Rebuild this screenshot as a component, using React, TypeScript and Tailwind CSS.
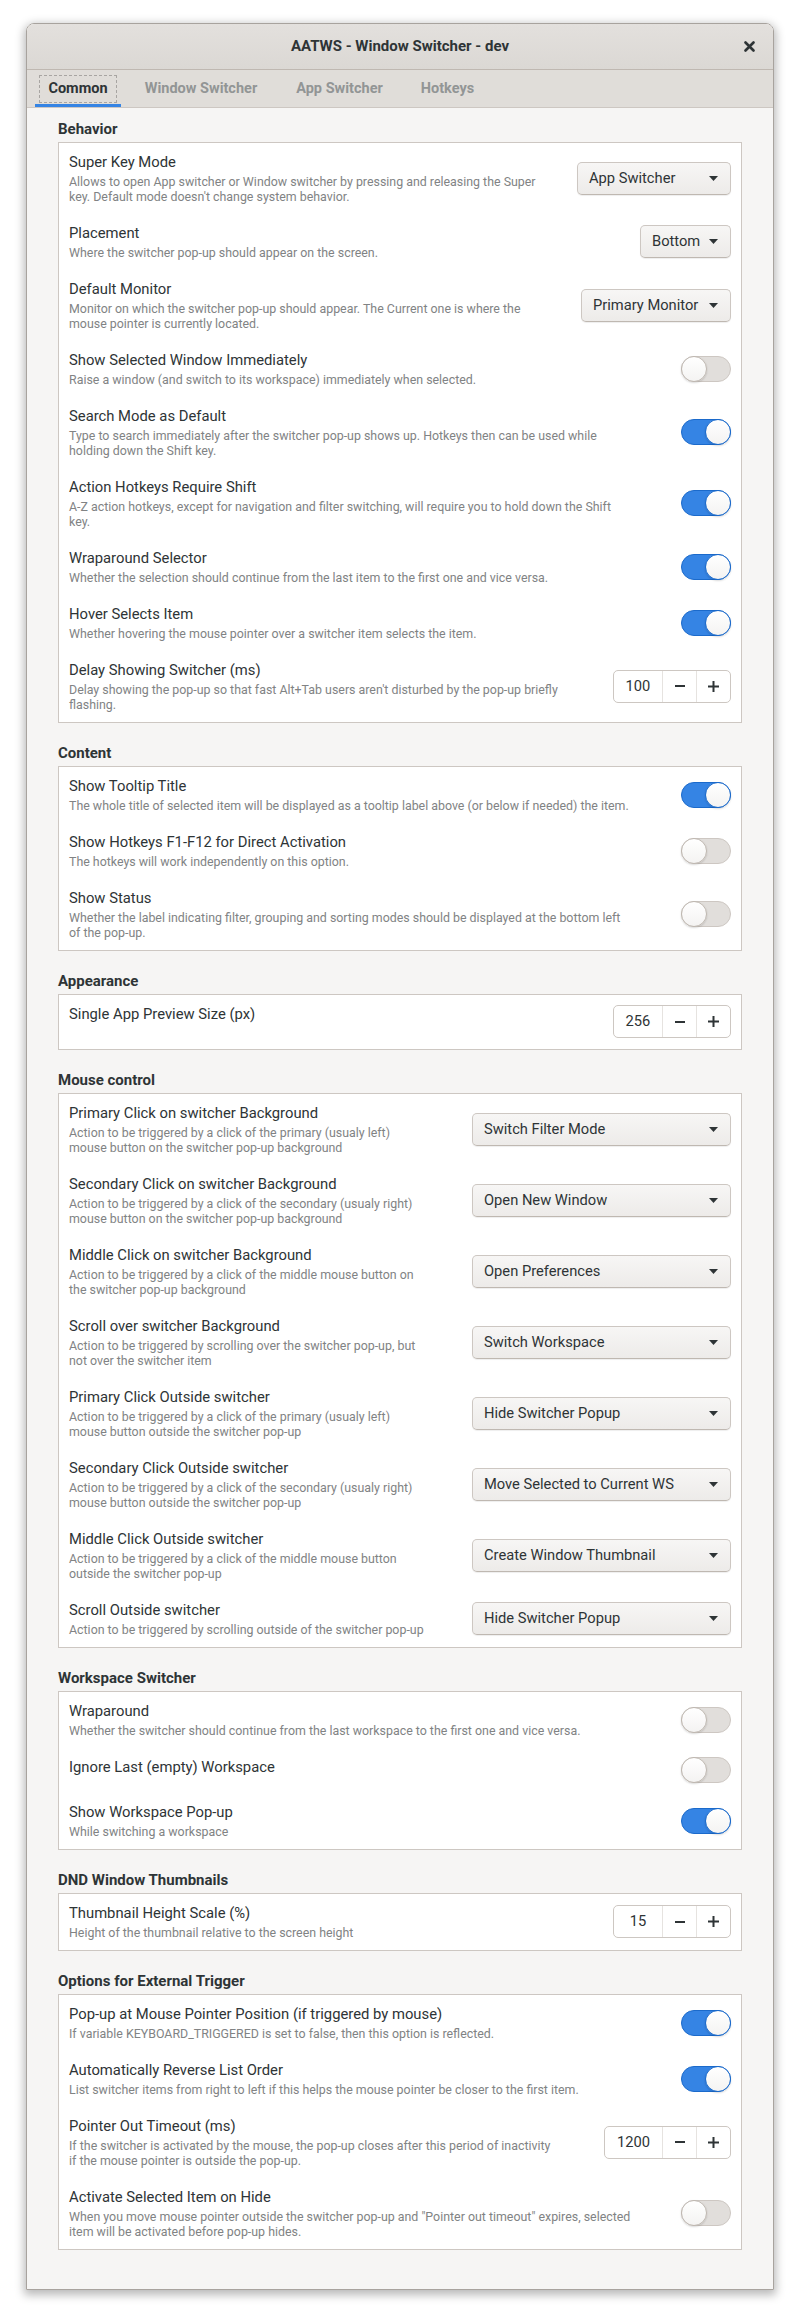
import React from "react";

type Ctrl =
  | { kind: "switch"; on: boolean }
  | { kind: "drop"; label: string; w: number }
  | { kind: "spin"; value: string; entryW: number };

type Row = { title: string; desc?: string[]; ctrl: Ctrl; minH?: boolean };
type Section = { heading: string; rows: Row[] };

const sections: Section[] = [
  {
    heading: "Behavior",
    rows: [
      {
        title: "Super Key Mode",
        desc: [
          "Allows to open App switcher or Window switcher by pressing and releasing the Super",
          "key. Default mode doesn't change system behavior.",
        ],
        ctrl: { kind: "drop", label: "App Switcher", w: 154 },
      },
      {
        title: "Placement",
        desc: ["Where the switcher pop-up should appear on the screen."],
        ctrl: { kind: "drop", label: "Bottom", w: 91 },
      },
      {
        title: "Default Monitor",
        desc: [
          "Monitor on which the switcher pop-up should appear. The Current one is where the",
          "mouse pointer is currently located.",
        ],
        ctrl: { kind: "drop", label: "Primary Monitor", w: 150 },
      },
      {
        title: "Show Selected Window Immediately",
        desc: ["Raise a window (and switch to its workspace) immediately when selected."],
        ctrl: { kind: "switch", on: false },
      },
      {
        title: "Search Mode as Default",
        desc: [
          "Type to search immediately after the switcher pop-up shows up. Hotkeys then can be used while",
          "holding down the Shift key.",
        ],
        ctrl: { kind: "switch", on: true },
      },
      {
        title: "Action Hotkeys Require Shift",
        desc: [
          "A-Z action hotkeys, except for navigation and filter switching, will require you to hold down the Shift",
          "key.",
        ],
        ctrl: { kind: "switch", on: true },
      },
      {
        title: "Wraparound Selector",
        desc: ["Whether the selection should continue from the last item to the first one and vice versa."],
        ctrl: { kind: "switch", on: true },
      },
      {
        title: "Hover Selects Item",
        desc: ["Whether hovering the mouse pointer over a switcher item selects the item."],
        ctrl: { kind: "switch", on: true },
      },
      {
        title: "Delay Showing Switcher (ms)",
        desc: [
          "Delay showing the pop-up so that fast Alt+Tab users aren't disturbed by the pop-up briefly",
          "flashing.",
        ],
        ctrl: { kind: "spin", value: "100", entryW: 48 },
      },
    ],
  },
  {
    heading: "Content",
    rows: [
      {
        title: "Show Tooltip Title",
        desc: [
          "The whole title of selected item will be displayed as a tooltip label above (or below if needed) the item.",
        ],
        ctrl: { kind: "switch", on: true },
      },
      {
        title: "Show Hotkeys F1-F12 for Direct Activation",
        desc: ["The hotkeys will work independently on this option."],
        ctrl: { kind: "switch", on: false },
      },
      {
        title: "Show Status",
        desc: [
          "Whether the label indicating filter, grouping and sorting modes should be displayed at the bottom left",
          "of the pop-up.",
        ],
        ctrl: { kind: "switch", on: false },
      },
    ],
  },
  {
    heading: "Appearance",
    rows: [
      {
        title: "Single App Preview Size (px)",
        ctrl: { kind: "spin", value: "256", entryW: 48 },
        minH: true,
      },
    ],
  },
  {
    heading: "Mouse control",
    rows: [
      {
        title: "Primary Click on switcher Background",
        desc: [
          "Action to be triggered by a click of the primary (usualy left)",
          "mouse button on the switcher pop-up background",
        ],
        ctrl: { kind: "drop", label: "Switch Filter Mode", w: 259 },
      },
      {
        title: "Secondary Click on switcher Background",
        desc: [
          "Action to be triggered by a click of the secondary (usualy right)",
          "mouse button on the switcher pop-up background",
        ],
        ctrl: { kind: "drop", label: "Open New Window", w: 259 },
      },
      {
        title: "Middle Click on switcher Background",
        desc: [
          "Action to be triggered by a click of the middle mouse button on",
          "the switcher pop-up background",
        ],
        ctrl: { kind: "drop", label: "Open Preferences", w: 259 },
      },
      {
        title: "Scroll over switcher Background",
        desc: [
          "Action to be triggered by scrolling over the switcher pop-up, but",
          "not over the switcher item",
        ],
        ctrl: { kind: "drop", label: "Switch Workspace", w: 259 },
      },
      {
        title: "Primary Click Outside switcher",
        desc: [
          "Action to be triggered by a click of the primary (usualy left)",
          "mouse button outside the switcher pop-up",
        ],
        ctrl: { kind: "drop", label: "Hide Switcher Popup", w: 259 },
      },
      {
        title: "Secondary Click Outside switcher",
        desc: [
          "Action to be triggered by a click of the secondary (usualy right)",
          "mouse button outside the switcher pop-up",
        ],
        ctrl: { kind: "drop", label: "Move Selected to Current WS", w: 259 },
      },
      {
        title: "Middle Click Outside switcher",
        desc: [
          "Action to be triggered by a click of the middle mouse button",
          "outside the switcher pop-up",
        ],
        ctrl: { kind: "drop", label: "Create Window Thumbnail", w: 259 },
      },
      {
        title: "Scroll Outside switcher",
        desc: ["Action to be triggered by scrolling outside of the switcher pop-up"],
        ctrl: { kind: "drop", label: "Hide Switcher Popup", w: 259 },
      },
    ],
  },
  {
    heading: "Workspace Switcher",
    rows: [
      {
        title: "Wraparound",
        desc: ["Whether the switcher should continue from the last workspace to the first one and vice versa."],
        ctrl: { kind: "switch", on: false },
      },
      {
        title: "Ignore Last (empty) Workspace",
        ctrl: { kind: "switch", on: false },
      },
      {
        title: "Show Workspace Pop-up",
        desc: ["While switching a workspace"],
        ctrl: { kind: "switch", on: true },
      },
    ],
  },
  {
    heading: "DND Window Thumbnails",
    rows: [
      {
        title: "Thumbnail Height Scale (%)",
        desc: ["Height of the thumbnail relative to the screen height"],
        ctrl: { kind: "spin", value: "15", entryW: 48 },
      },
    ],
  },
  {
    heading: "Options for External Trigger",
    rows: [
      {
        title: "Pop-up at Mouse Pointer Position (if triggered by mouse)",
        desc: ["If variable KEYBOARD_TRIGGERED is set to false, then this option is reflected."],
        ctrl: { kind: "switch", on: true },
      },
      {
        title: "Automatically Reverse List Order",
        desc: ["List switcher items from right to left if this helps the mouse pointer be closer to the first item."],
        ctrl: { kind: "switch", on: true },
      },
      {
        title: "Pointer Out Timeout (ms)",
        desc: [
          "If the switcher is activated by the mouse, the pop-up closes after this period of inactivity",
          "if the mouse pointer is outside the pop-up.",
        ],
        ctrl: { kind: "spin", value: "1200", entryW: 57 },
      },
      {
        title: "Activate Selected Item on Hide",
        desc: [
          'When you move mouse pointer outside the switcher pop-up and "Pointer out timeout" expires, selected',
          "item will be activated before pop-up hides.",
        ],
        ctrl: { kind: "switch", on: false },
      },
    ],
  },
];

function Switch({ on }: { on: boolean }) {
  return (
    <div
      className={
        on
          ? "flex h-[26px] w-[50px] shrink-0 items-center justify-end rounded-full border border-[#1b6acb] bg-[#3584e4]"
          : "flex h-[26px] w-[50px] shrink-0 items-center justify-start rounded-full border border-[#cdc7c2] bg-[#e1dedb]"
      }
    >
      <div
        className={
          on
            ? "-m-[1px] h-[26px] w-[26px] rounded-full border border-[#1b6acb] bg-gradient-to-b from-white to-[#f4f3f2] shadow-[0_1px_2px_rgba(0,0,0,0.15)]"
            : "-m-[1px] h-[26px] w-[26px] rounded-full border border-[#bfb8b1] bg-gradient-to-b from-white to-[#f4f3f2] shadow-[0_1px_2px_rgba(0,0,0,0.15)]"
        }
      />
    </div>
  );
}

function Drop({ label, w }: { label: string; w: number }) {
  return (
    <div
      style={{ width: w }}
      className="flex h-[33px] shrink-0 items-center justify-between rounded-[5px] border border-[#cdc7c2] border-b-[#bfb8b1] bg-gradient-to-b from-[#f7f6f5] to-[#edebe9] pl-[11px] pr-[12px] text-[14.7px] text-[#2e3436] shadow-[0_1px_1px_rgba(0,0,0,0.07)]"
    >
      <span className="whitespace-nowrap">{label}</span>
      <svg width="9" height="5" viewBox="0 0 9 5" className="shrink-0">
        <path d="M0 0 L9 0 L4.5 5 Z" fill="#2e3436" />
      </svg>
    </div>
  );
}

function Spin({ value, entryW }: { value: string; entryW: number }) {
  return (
    <div className="flex h-[33px] shrink-0 rounded-[5px] border border-[#cdc7c2] bg-white text-[14.7px] text-[#2e3436]">
      <div style={{ width: entryW }} className="flex items-center justify-center">
        {value}
      </div>
      <div className="flex w-[34px] items-center justify-center border-l border-[#e6e3e0]">
        <svg width="10" height="10" viewBox="0 0 10 10">
          <path d="M0 5 H10" stroke="#2e3436" strokeWidth="2" />
        </svg>
      </div>
      <div className="flex w-[34px] items-center justify-center border-l border-[#e6e3e0]">
        <svg width="11" height="11" viewBox="0 0 11 11">
          <path d="M0 5.5 H11 M5.5 0 V11" stroke="#2e3436" strokeWidth="2" />
        </svg>
      </div>
    </div>
  );
}

function Control({ c }: { c: Ctrl }) {
  if (c.kind === "switch") return <Switch on={c.on} />;
  if (c.kind === "drop") return <Drop label={c.label} w={c.w} />;
  return <Spin value={c.value} entryW={c.entryW} />;
}

function RowView({ row }: { row: Row }) {
  return (
    <div
      className={
        row.minH
          ? "flex min-h-[54px] items-center justify-between gap-4 pb-[10px] pl-[10px] pr-[10px] pt-[9px]"
          : "flex items-center justify-between gap-4 pb-[10px] pl-[10px] pr-[10px] pt-[9px]"
      }
    >
      <div className="self-start">
        <div className="whitespace-nowrap text-[14.8px] leading-[20px] text-[#2e3436]">{row.title}</div>
        {row.desc && (
          <div className="mt-[2px] text-[12.4px] leading-[15px] text-[#818384]">
            {row.desc.map((l, i) => (
              <div key={i} className="whitespace-nowrap">
                {l}
              </div>
            ))}
          </div>
        )}
      </div>
      <Control c={row.ctrl} />
    </div>
  );
}

const tabs = [
  { label: "Common", w: 86, active: true },
  { label: "Window Switcher", w: 144, active: false },
  { label: "App Switcher", w: 117, active: false },
  { label: "Hotkeys", w: 83, active: false },
];

export default function App() {
  return (
    <div className="h-[2319px] w-[800px] bg-white pt-[23px] font-['Roboto',sans-serif]">
      <div className="ml-[26px] w-[748px] overflow-hidden rounded-t-[8px] border border-[#a8a39e] shadow-[0_3px_10px_2px_rgba(0,0,0,0.28)]">
        {/* title bar */}
        <div className="grid h-[46px] grid-cols-[1fr_auto_1fr] items-center border-b border-[#bfb8b1] bg-gradient-to-b from-[#e3e0dd] to-[#dbd8d4]">
          <div />
          <div className="text-[15px] font-bold text-[#2e3436]">AATWS - Window Switcher - dev</div>
          <div className="flex justify-end pr-[18px]">
            <svg width="11" height="11" viewBox="0 0 11 11">
              <path d="M1.5 1.5 L9.5 9.5 M9.5 1.5 L1.5 9.5" stroke="#2e3436" strokeWidth="2.6" strokeLinecap="round" />
            </svg>
          </div>
        </div>
        {/* tab bar */}
        <div className="flex h-[38px] gap-2 border-b border-[#cdc7c2] bg-[#e0ddd9] pl-[8px]">
          {tabs.map((t) => (
            <div key={t.label} style={{ width: t.w }} className="flex h-full flex-col">
              <div
                className={
                  t.active
                    ? "mx-[4px] mb-[1px] mt-[5px] flex flex-1 items-center justify-center border border-dashed border-[#a8a5a2] text-[14.5px] font-bold text-[#2e3436]"
                    : "mx-[4px] mb-[1px] mt-[5px] flex flex-1 items-center justify-center border border-transparent text-[14.5px] font-bold text-[#929595]"
                }
              >
                {t.label}
              </div>
              <div className={t.active ? "h-[3px] bg-[#3584e4]" : "h-[3px]"} />
            </div>
          ))}
        </div>
        {/* content */}
        <div className="bg-[#f6f5f4] px-[31px] pb-[39px] pt-[11px]">
          {sections.map((s, i) => (
            <div key={s.heading} className={i === 0 ? "" : "mt-[20px]"}>
              <div className="mb-[3px] text-[15px] font-bold leading-[20px] text-[#2e3436]">{s.heading}</div>
              <div className="border border-[#cdc7c2] bg-white">
                {s.rows.map((r) => (
                  <RowView key={r.title} row={r} />
                ))}
              </div>
            </div>
          ))}
        </div>
      </div>
    </div>
  );
}
